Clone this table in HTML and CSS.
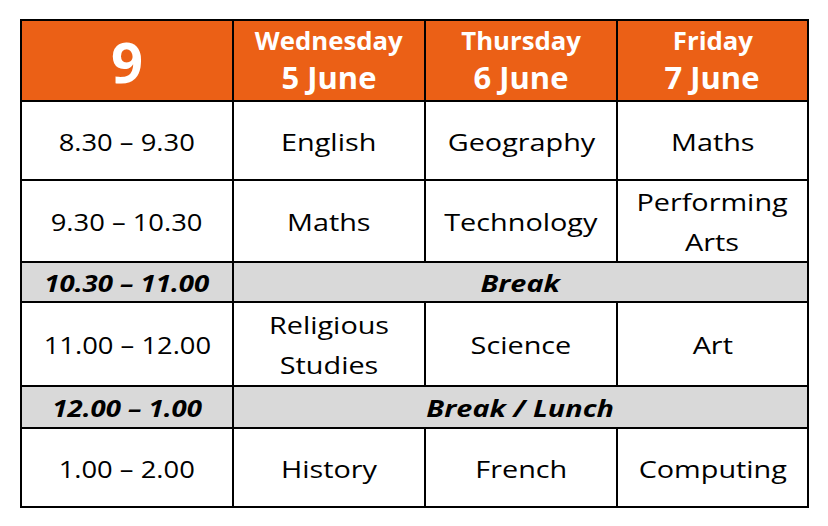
FILE: index.html
```html
<!DOCTYPE html>
<html>
<head>
<meta charset="utf-8">
<link rel="stylesheet" href="styles.css">
</head>
<body>
<div class="timetable">
  <div class="cell head year"><span class="t">9</span></div>
  <div class="cell head"><span class="t day">Wednesday</span><span class="t date">5 June</span></div>
  <div class="cell head"><span class="t day">Thursday</span><span class="t date">6 June</span></div>
  <div class="cell head"><span class="t day">Friday</span><span class="t date">7 June</span></div>

  <div class="cell time"><span class="t">8.30 – 9.30</span></div>
  <div class="cell"><span class="t">English</span></div>
  <div class="cell"><span class="t">Geography</span></div>
  <div class="cell"><span class="t">Maths</span></div>

  <div class="cell time"><span class="t">9.30 – 10.30</span></div>
  <div class="cell"><span class="t">Maths</span></div>
  <div class="cell"><span class="t">Technology</span></div>
  <div class="cell"><span class="t">Performing<br>Arts</span></div>

  <div class="cell brk time"><span class="t">10.30 – 11.00</span></div>
  <div class="cell brk span3"><span class="t">Break</span></div>

  <div class="cell time"><span class="t">11.00 – 12.00</span></div>
  <div class="cell"><span class="t">Religious<br>Studies</span></div>
  <div class="cell"><span class="t">Science</span></div>
  <div class="cell"><span class="t">Art</span></div>

  <div class="cell brk time"><span class="t">12.00 – 1.00</span></div>
  <div class="cell brk span3"><span class="t">Break / Lunch</span></div>

  <div class="cell time"><span class="t">1.00 – 2.00</span></div>
  <div class="cell"><span class="t">History</span></div>
  <div class="cell"><span class="t">French</span></div>
  <div class="cell"><span class="t">Computing</span></div>
</div>
</body>
</html>
```
FILE: styles.css
```css
html, body {
  margin: 0;
  padding: 0;
  background: #ffffff;
}
body {
  padding: 19px 0 0 20px;
  font-family: "Open Sans", "Noto Sans", sans-serif;
  color: #000;
}
.timetable {
  display: grid;
  width: 789px;
  grid-template-columns: 210px 190px 190px 189px;
  grid-template-rows: 79px 77px 80px 38px 82px 40px 77px;
  gap: 2px;
  padding: 2px;
  box-sizing: border-box;
  background: #000;
}
.cell {
  background: #fff;
  display: flex;
  flex-direction: column;
  align-items: center;
  justify-content: center;
  text-align: center;
  font-size: 24px;
  line-height: 40px;
  padding-top: 2px;
}
.t {
  display: inline-block;
  white-space: nowrap;
  transform: scaleX(1.2);
}
.cell.time .t {
  transform: scaleX(1.14);
}
.head {
  background: #eb6016;
  color: #fff;
  font-weight: 700;
  padding-top: 0;
}
.head .day {
  font-size: 25px;
  line-height: 34px;
  transform: scaleX(1.03);
}
.head .date {
  font-size: 30px;
  line-height: 42px;
  transform: scaleX(1.03);
}
.year {
  font-size: 56px;
}
.year .t {
  transform: none;
}
.brk {
  background: #d9d9d9;
  font-weight: 700;
  font-style: italic;
}
.brk.time .t {
  transform: scaleX(1.15);
}
.span3 {
  grid-column: span 3;
}
```
